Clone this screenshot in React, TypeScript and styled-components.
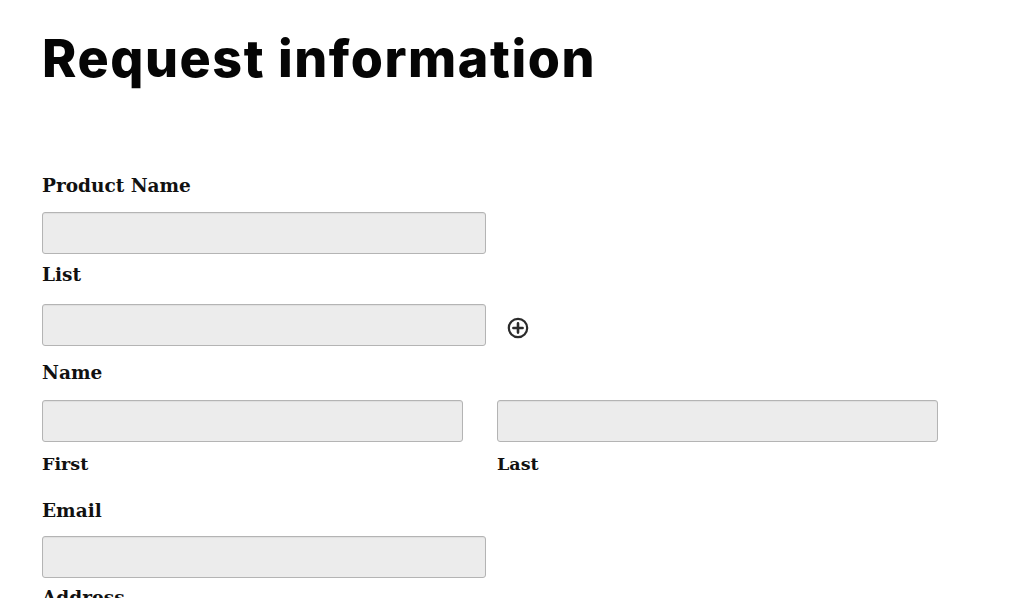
import React from 'react';
import styled, { createGlobalStyle } from 'styled-components';

const GlobalStyle = createGlobalStyle`
  html, body {
    margin: 0;
    padding: 0;
    background: #ffffff;
  }
  body {
    font-family: "DejaVu Serif", "Liberation Serif", serif;
    color: #111111;
  }
`;

const Page = styled.div`
  padding: 0 42px;
  overflow: hidden;
  height: 598px;
`;

const Title = styled.h1`
  margin: 28px 0 79px;
  font-family: Inter, "Liberation Sans", sans-serif;
  font-weight: 800;
  font-size: 52px;
  line-height: 1.2;
  letter-spacing: 1.55px;
  color: #050505;
`;

const Field = styled.div<{ $after: number }>`
  display: flex;
  flex-direction: column;
  margin-bottom: ${(p) => p.$after}px;
`;

const Label = styled.label<{ $below: number }>`
  display: block;
  font-size: 18.5px;
  line-height: 30px;
  padding-top: 2px;
  font-weight: bold;
  margin-bottom: ${(p) => p.$below - 2}px;
`;

const SubLabel = styled.span`
  display: block;
  font-size: 17.5px;
  font-weight: bold;
  line-height: 30px;
  margin-top: 7px;
`;

const Input = styled.input<{ $width: number }>`
  box-sizing: border-box;
  width: ${(p) => p.$width}px;
  height: 42px;
  background: #ececec;
  border: 1px solid #b4b4b4;
  border-radius: 3px;
  box-shadow: inset 0 1px 1px rgba(0, 0, 0, 0.06);
  padding: 0 10px;
  font-size: 16px;
  outline: none;
`;

const InputRow = styled.div`
  display: flex;
  align-items: center;
  gap: 21px;
`;

const NameRow = styled.div`
  display: flex;
  gap: 34px;
`;

const Column = styled.div`
  display: flex;
  flex-direction: column;
`;

const AddButton = styled.button`
  display: flex;
  align-items: center;
  justify-content: center;
  width: 22px;
  height: 22px;
  padding: 0;
  margin-top: 5px;
  border: none;
  background: none;
  cursor: pointer;
  color: #2b2b2b;
`;

const PlusCircle = () => (
  <svg width="22" height="22" viewBox="0 0 22 22" fill="none">
    <circle cx="11" cy="11" r="9.2" stroke="currentColor" strokeWidth="2.2" />
    <path d="M11 6.4v9.2M6.4 11h9.2" stroke="currentColor" strokeWidth="2.6" strokeLinecap="round" />
  </svg>
);

const App = () => {
  return (
    <Page>
      <GlobalStyle />
      <Title>Request information</Title>

      <Field $after={4}>
        <Label $below={13}>Product Name</Label>
        <Input $width={444} />
      </Field>

      <Field $after={10}>
        <Label $below={16}>List</Label>
        <InputRow>
          <Input $width={444} />
          <AddButton type="button" aria-label="Add">
            <PlusCircle />
          </AddButton>
        </InputRow>
      </Field>

      <Field $after={15}>
        <Label $below={14}>Name</Label>
        <NameRow>
          <Column>
            <Input $width={421} />
            <SubLabel>First</SubLabel>
          </Column>
          <Column>
            <Input $width={441} />
            <SubLabel>Last</SubLabel>
          </Column>
        </NameRow>
      </Field>

      <Field $after={3}>
        <Label $below={12}>Email</Label>
        <Input $width={444} />
      </Field>

      <Field $after={0}>
        <Label $below={12}>Address</Label>
      </Field>
    </Page>
  );
};

export default App;
